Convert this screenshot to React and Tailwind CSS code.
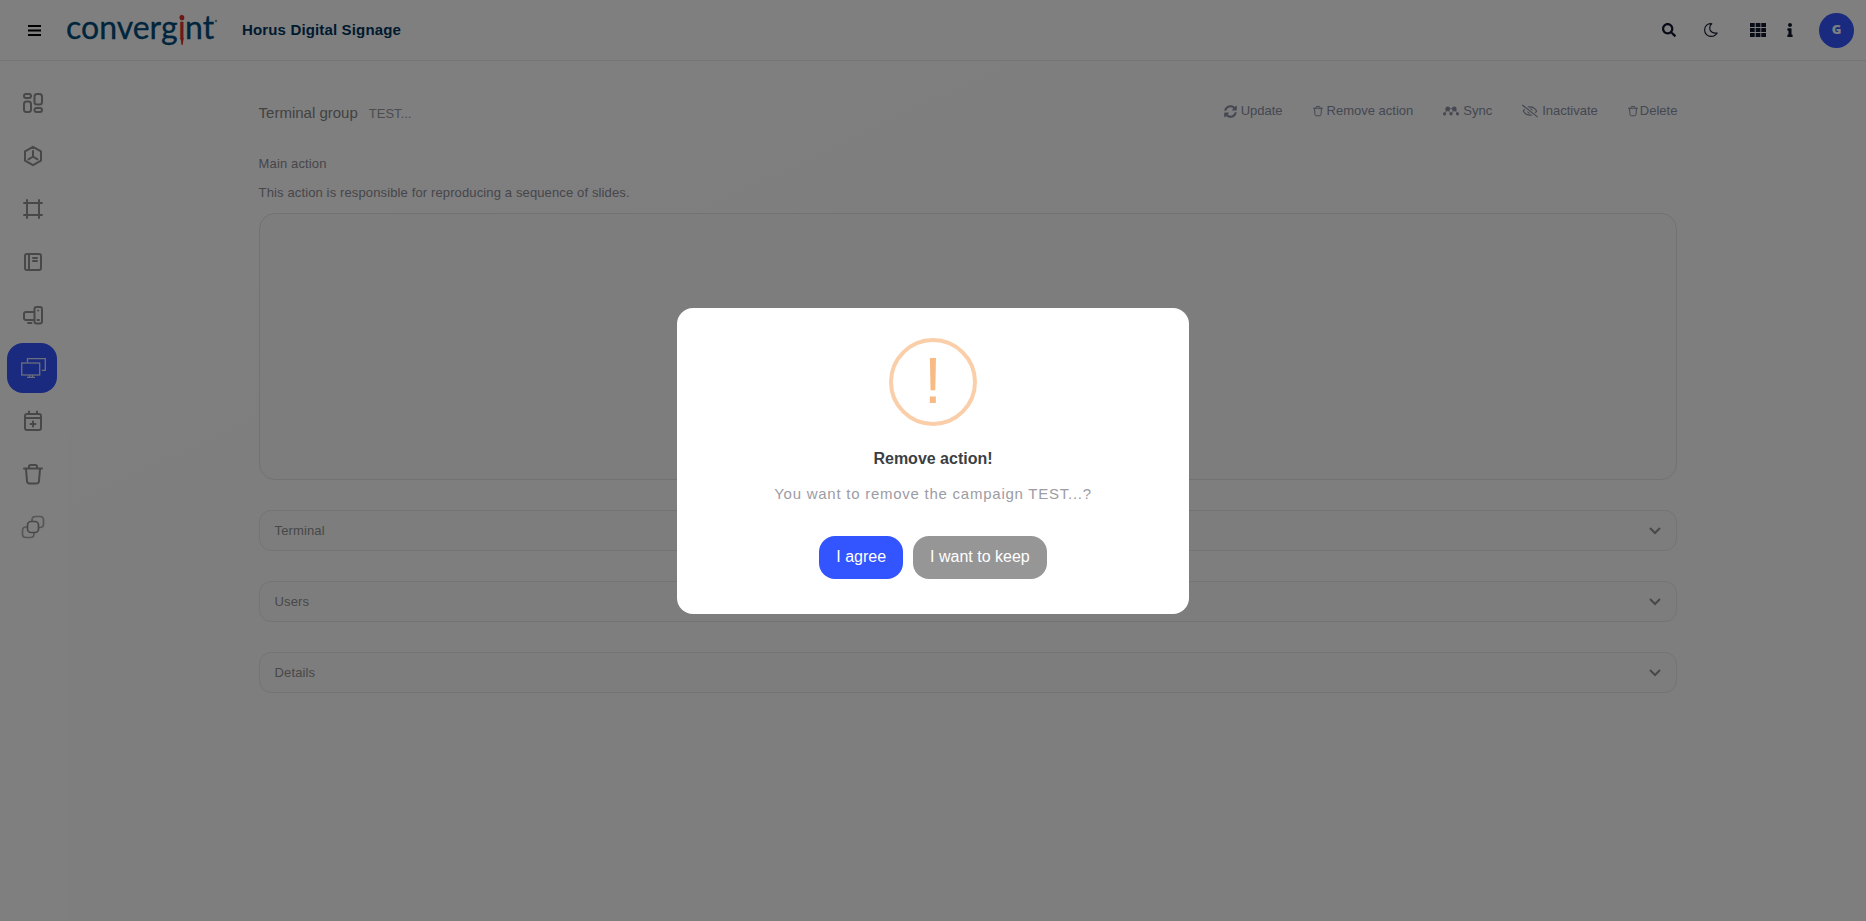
import React from "react";
import { FaSearch, FaInfo, FaSyncAlt, FaMendeley, FaRegEyeSlash } from "react-icons/fa";

function Icon({ children, size = "size-5", width = 2 }) {
  return (
    <svg viewBox="0 0 20 20" className={`${size} overflow-visible`} fill="none" stroke="currentColor" strokeWidth={width} strokeLinecap="round" strokeLinejoin="round" aria-hidden="true">
      {children}
    </svg>
  );
}

function TrashShape() {
  return <path d="M1 4.5h18M6 4V2.5Q6 1 7.500 1h5Q14 1 14 2.500V4M3 5l1 12Q4.200 19.500 6.500 19.500h7Q15.800 19.500 16 17L17 5" />;
}

const navItems = [
  { label: "Dashboard", icon: (
    <Icon><rect x="1" y="1" width="7" height="4" rx="2" /><rect x="1" y="8.500" width="7" height="10.500" rx="2.500" /><rect x="11.500" y="1" width="7.500" height="10.500" rx="2.500" /><rect x="11.500" y="15" width="7.500" height="4" rx="2" /></Icon>
  ) },
  { label: "Modules", icon: (
    <Icon><path d="M10 .8 18 5.300v9.400l-8 4.500-8-4.500V5.300zM10 5v5.500M10 10.500l-4.500 2.800M10 10.500l4.500 2.800" /></Icon>
  ) },
  { label: "Frames", icon: <Icon><path d="M1 4h18M1 16h18M4 1v18M16 1v18" /></Icon> },
  { label: "Library", icon: (
    <Icon><rect x="2" y="2" width="16" height="16" rx="2" /><path d="M6 2v16M10 6h4M10 9h4" /></Icon>
  ) },
  { label: "Terminals", icon: (
    <Icon><path d="M10.500 15H3q-2 0-2-2V9q0-2 2-2h7.500M5 18h3.500" /><rect x="11.500" y="2" width="7.500" height="16.500" rx="2" /><path d="M15.200 5.500v.1M14.500 15h1.500" /></Icon>
  ) },
  { label: "Terminal groups", active: true, icon: (
    <svg viewBox="0 0 25 20" className="h-5 w-[25px]" fill="none" stroke="currentColor" strokeWidth="1.300" aria-hidden="true">
      <rect x=".7" y="5" width="18" height="12" /><path d="M6.500 4.500V.700h17.800v11.600h-3.500M6 19.300h8M8.500 17v2M11.500 17v2" />
    </svg>
  ) },
  { label: "Schedule", icon: (
    <Icon><rect x="2" y="3" width="16" height="16" rx="2" /><path d="M2 7h16M6 .5V3M14 .5V3M10 10.500v5M7.500 13h5" /></Icon>
  ) },
  { label: "Trash", icon: <Icon><TrashShape /></Icon> },
  { label: "Layers", icon: (
    <Icon width={1.7}><rect x="4.500" y="4.500" width="11" height="11" rx="3.500" /><path d="M9 4V3q0-3.500 3.500-3.500h4.500q3.500 0 3.500 3.500v4q0 3.500-3.500 3.500h-1M4 10H3Q-.5 10-.5 13.500V17q0 3.500 3.500 3.500h4.500q3.500 0 3.500-3.500v-1" opacity=".75" /></Icon>
  ) },
];

function Logo() {
  return (
    <svg viewBox="0 0 152 40" className="h-10 w-[152px] overflow-visible" role="img" aria-label="convergint">
      <g fontFamily="Lato, sans-serif" fontSize="32" fill="#004a78" stroke="#004a78" strokeWidth=".3">
        <text x="-1" y="29">converg</text>
        <text x="111" y="29" fill="#d8322c" stroke="#d8322c">i</text>
        <text x="118" y="29">nt</text>
      </g>
      <path d="M113.500 28h3.200l-1 7h-1.200z" fill="#d8322c" />
      <circle cx="115" cy="8" r="2.400" fill="#d8322c" />
      <circle cx="149" cy="11" r="1.200" fill="#7590a8" />
    </svg>
  );
}

const actions = [
  { label: "Update", gap: "gap-1", icon: <FaSyncAlt className="size-[13px]" /> },
  { label: "Remove action", gap: "gap-1", icon: <Icon size="size-[10px]"><TrashShape /></Icon> },
  { label: "Sync", gap: "gap-1", icon: <FaMendeley className="size-4" /> },
  { label: "Inactivate", gap: "gap-1", icon: <FaRegEyeSlash className="size-4" /> },
  { label: "Delete", gap: "gap-0.5", icon: <Icon size="size-[10px]"><TrashShape /></Icon> },
];

function Panel({ title }) {
  return (
    <button type="button" aria-expanded="false" className="flex h-[41px] w-full items-center justify-between rounded-xl border border-[#e8e8ea] bg-[#fafafa] px-[15px] text-[13px] font-medium tracking-[0.01em] text-[#909090]">
      {title}
      <svg viewBox="0 0 12 8" className="h-2 w-3" fill="none" stroke="#909090" strokeWidth="2" aria-hidden="true"><path d="m1 1 5 5 5-5" /></svg>
    </button>
  );
}

export default function App() {
  return (
    <div className="flex min-h-screen flex-col bg-white font-['Liberation_Sans',Arial,sans-serif]">
      <header className="flex h-[61px] shrink-0 items-center border-b border-[#ebebee] pr-3 pl-7">
        <button type="button" aria-label="Menu" className="text-black">
          <svg viewBox="0 0 13 11" className="h-[11px] w-[13px]" fill="none" stroke="currentColor" strokeWidth="2" aria-hidden="true"><path d="M0 1h13M0 5.500h13M0 10h13" /></svg>
        </button>
        <a href="#home" className="ml-[26px]"><Logo /></a>
        <h1 className="ml-[23px] text-[15px] font-bold tracking-[0.01em] text-[#003560]">Horus Digital Signage</h1>
        <div className="ml-auto flex items-center text-[#10182e]">
          <button type="button" aria-label="Search"><FaSearch className="size-[14px]" /></button>
          <button type="button" aria-label="Dark mode" className="ml-7">
            <svg viewBox="0 0 14 14" className="size-[14px]" fill="none" stroke="currentColor" strokeWidth="1.100" strokeLinejoin="round" aria-hidden="true"><path d="M7.800.7C3.500 0 .600 3.300.600 7c0 3.800 3 6.400 6.500 6.400 2.700 0 4.900-1.300 6.100-3.400-4.500.5-7.500-1.500-7.500-5 0-2 .800-3.400 2.100-4.300z" /></svg>
          </button>
          <button type="button" aria-label="Apps" className="ml-8">
            <svg viewBox="0 0 16 14" className="h-[14px] w-4" fill="currentColor" aria-hidden="true">
              <path d="M0 0h4.700v4H0zM5.700 0h4.700v4H5.700zM11.300 0H16v4h-4.700zM0 5h4.700v4H0zM5.700 5h4.700v4H5.700zM11.300 5H16v4h-4.700zM0 10h4.700v4H0zM5.700 10h4.700v4H5.700zM11.300 10H16v4h-4.700z" />
            </svg>
          </button>
          <button type="button" aria-label="Information" className="ml-[17px]"><FaInfo className="size-[14px]" /></button>
          <button type="button" aria-label="Account" className="ml-[22px] flex size-[35px] items-center justify-center rounded-full bg-[#3355ff] font-['Open_Sans',sans-serif] text-[13px] font-extrabold text-white">G</button>
        </div>
      </header>

      <div className="flex flex-1">
        <nav className="flex w-[68px] shrink-0 flex-col gap-[3px] pt-[17px] pl-[7px] text-[#909090]">
          {navItems.map((item) => (
            <a key={item.label} href="#nav" aria-label={item.label} aria-current={item.active ? "page" : undefined} className={`flex size-[50px] items-center justify-center rounded-2xl pl-0.5 ${item.active ? "bg-[#3355ff] text-[#d8dcf4]" : ""}`}>
              {item.icon}
            </a>
          ))}
        </nav>

        <main className="min-w-0 flex-1 bg-linear-to-br from-white to-[#fcfcff] to-45% pl-0.5">
          <div className="mx-auto w-[79%] pt-10">
            <div className="flex items-start justify-between text-[#8a8fa2]">
              <h2 className="flex items-baseline gap-[11px] pt-0.5 text-[15px] leading-5 text-[#848484]">
                Terminal group <span className="text-[13px] text-[#98989f]">TEST...</span>
              </h2>
              <div className="flex gap-[30px]">
                {actions.map((action) => (
                  <button key={action.label} type="button" className={`flex items-center text-[13px] leading-5 ${action.gap}`}>
                    {action.icon}
                    {action.label}
                  </button>
                ))}
              </div>
            </div>
            <h3 className="mt-[30px] text-[13px] leading-5 font-medium tracking-[0.01em] text-[#8c8c95]">Main action</h3>
            <p className="mt-[9px] text-[13px] leading-5 font-medium tracking-[0.01em] text-[#8c8c95]">This action is responsible for reproducing a sequence of slides.</p>
            <section aria-label="Main action" className="mt-[10px] h-[267px] rounded-2xl border border-[#e4e4e6] bg-[#fafafa]" />
            <div className="mt-[30px] flex flex-col gap-[30px]">
              <Panel title="Terminal" />
              <Panel title="Users" />
              <Panel title="Details" />
            </div>
          </div>
        </main>
      </div>

      <div className="fixed inset-0 flex items-center justify-center bg-black/50">
        <div role="dialog" aria-modal="true" aria-labelledby="dialog-title" className="flex w-[512px] max-w-full flex-col items-center rounded-2xl bg-white px-5 pt-[30px] pb-[35px]">
          <div className="flex size-[88px] items-center justify-center rounded-full border-4 border-[#facea8] pb-0.5 text-[64px] leading-none text-[#f8bb86]" aria-hidden="true">!</div>
          <h2 id="dialog-title" className="mt-[23px] text-base leading-5 font-bold text-[#3b3f45]">Remove action!</h2>
          <p className="mt-[15px] text-[15px] leading-5 tracking-[0.05em] text-[#9c9ca4]">You want to remove the campaign TEST...?</p>
          <div className="mt-8 flex gap-[10px] text-base text-white">
            <button type="button" className="h-[43px] rounded-2xl bg-[#3355ff] px-[17px]">I agree</button>
            <button type="button" className="h-[43px] rounded-2xl bg-[#969696] px-[17px]">I want to keep</button>
          </div>
        </div>
      </div>
    </div>
  );
}
